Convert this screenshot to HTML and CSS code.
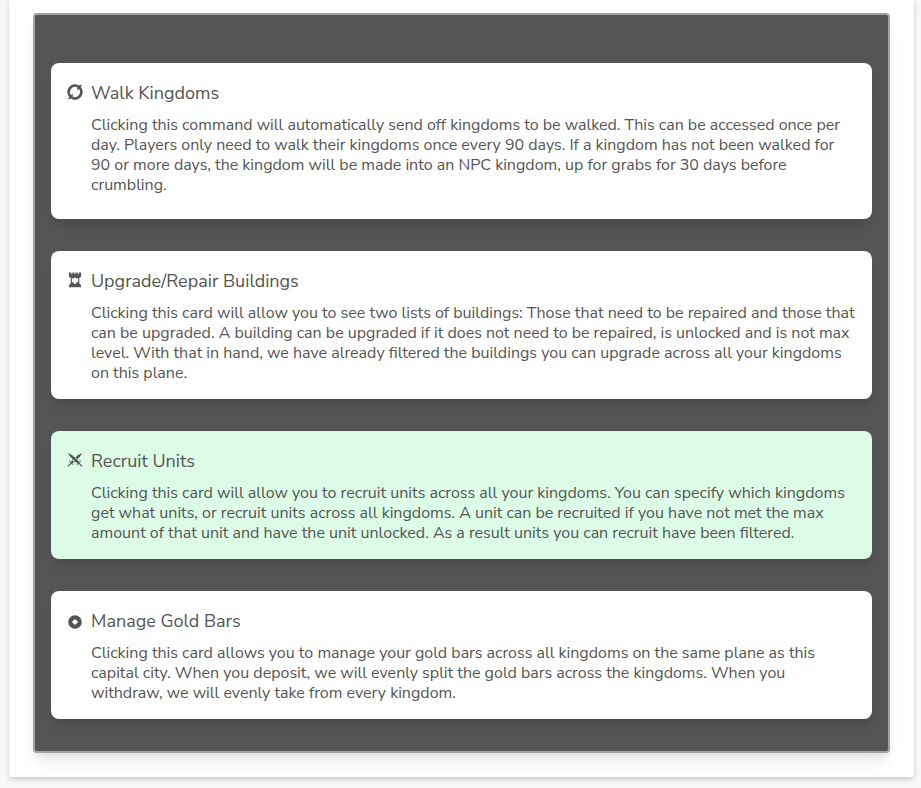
FILE: index.html
```html
<!DOCTYPE html>
<html lang="en">
<head>
<meta charset="utf-8">
<title>Capital City</title>
<link rel="stylesheet" href="styles.css">
</head>
<body>
<main class="page">
  <section class="panel">
    <article class="card tall">
      <svg class="icon" viewBox="0 0 16 16"><g fill="none" stroke="currentColor" stroke-width="2.700"><path d="M3.600 12.600A6.400 6.400 0 0 1 10.500 2.100"/><path d="M12.400 3.400A6.400 6.400 0 0 1 5.500 13.900"/></g><path d="M10.200 6.500V1.500L15.300.800 13.200 3.500zM5.800 9.500v5L.700 15.200 2.800 12.500z" fill="currentColor"/></svg>
      <div class="content">
        <h2>Walk Kingdoms</h2>
        <p>Clicking this command will automatically send off kingdoms to be walked. This can be accessed once per day. Players only need to walk their kingdoms once every 90 days. If a kingdom has not been walked for 90 or more days, the kingdom will be made into an NPC kingdom, up for grabs for 30 days before crumbling.</p>
      </div>
    </article>
    <article class="card">
      <svg class="icon" viewBox="0 0 16 16"><path fill="currentColor" fill-rule="evenodd" d="M2 .5h2.300v1.800h1V.500h2.200v1.800h1V.500h2.200v1.800h1V.500H14V4.800l-1.700 1.200v5.500L14 13v2.300H2V13l1.700-1.500V6L2 4.800zM4.800 5.800v3.400C5.500 10.300 7 10.800 8 12.300c1-1.500 2.500-2 3.200-3.100V5.800l-1.600.900L8 5.200 6.400 6.700z"/></svg>
      <div class="content">
        <h2>Upgrade/Repair Buildings</h2>
        <p>Clicking this card will allow you to see two lists of buildings: Those that need to be repaired and those that can be upgraded. A building can be upgraded if it does not need to be repaired, is unlocked and is not max level. With that in hand, we have already filtered the buildings you can upgrade across all your kingdoms on this plane.</p>
      </div>
    </article>
    <article class="card selected">
      <svg class="icon" viewBox="0 0 16 16"><g fill="currentColor"><path d="M.6.800 5.300 3.200l7 6.800-1.600 1.500L3.400 5zM15.400.800 10.700 3.200l-7 6.800 1.600 1.500L12.600 5zM8 4.800 11 8 8 10.500 5 8z"/></g><g fill="none" stroke="currentColor" stroke-width="1.200"><path d="M9.300 12.300 11 11.900 13 9.800l.4-1.600M6.700 12.300 5 11.900 3 9.800l-.4-1.600" stroke-opacity=".65"/><path d="M11 10.300l4.100 4.100M5 10.300.9 14.400"/></g></svg>
      <div class="content">
        <h2>Recruit Units</h2>
        <p>Clicking this card will allow you to recruit units across all your kingdoms. You can specify which kingdoms get what units, or recruit units across all kingdoms. A unit can be recruited if you have not met the max amount of that unit and have the unit unlocked. As a result units you can recruit have been filtered.</p>
      </div>
    </article>
    <article class="card">
      <svg class="icon low" viewBox="0 0 16 16"><path fill="currentColor" fill-rule="evenodd" d="M8 2.200a6.800 6.800 0 1 1 0 13.600A6.800 6.800 0 0 1 8 2.200zm0 3.700L4.900 9 8 12.100 11.100 9z"/></svg>
      <div class="content">
        <h2>Manage Gold Bars</h2>
        <p>Clicking this card allows you to manage your gold bars across all kingdoms on the same plane as this capital city. When you deposit, we will evenly split the gold bars across the kingdoms. When you withdraw, we will evenly take from every kingdom.</p>
      </div>
    </article>
  </section>
</main>
</body>
</html>
```
FILE: styles.css
```css
* { box-sizing: border-box; }
html { background: #f8f8f8; }
body { margin: 0; min-height: 788px; padding-bottom: 11px; color: #555; font-family: "Nunito Sans", Nunito, Lato, sans-serif; }
.page { width: 905px; height: 777px; margin-left: 9px; padding: 13px 24px 24px; background: #fff; border-radius: 0 0 2px 2px; box-shadow: 0 4px 6px -1px rgba(0,0,0,.12), 0 1px 4px rgba(0,0,0,.1); }
.panel { width: 857px; height: 740px; padding: 48px 16px 32px; display: flex; flex-direction: column; gap: 32px; background: #555; border: 2px solid #a3a3a3; border-radius: 4px; box-shadow: 0 10px 15px -3px rgba(0,0,0,.1), 0 4px 6px -2px rgba(0,0,0,.05); }
.card { display: flex; gap: 8px; padding: 16px; border-radius: 8px; background: #fff; box-shadow: 0 10px 15px -3px rgba(0,0,0,.1), 0 4px 6px -2px rgba(0,0,0,.05); }
.card.tall { padding-bottom: 24px; }
.card.selected { background: #dcfce7; }
.icon { flex: none; width: 16px; height: 16px; margin-top: 5px; }
.icon.low { margin-top: 6px; }
h2 { margin: 0 0 8px; font-size: 18px; line-height: 28px; font-weight: 400; }
p { margin: 0; font-size: 16px; line-height: 20px; }
```
